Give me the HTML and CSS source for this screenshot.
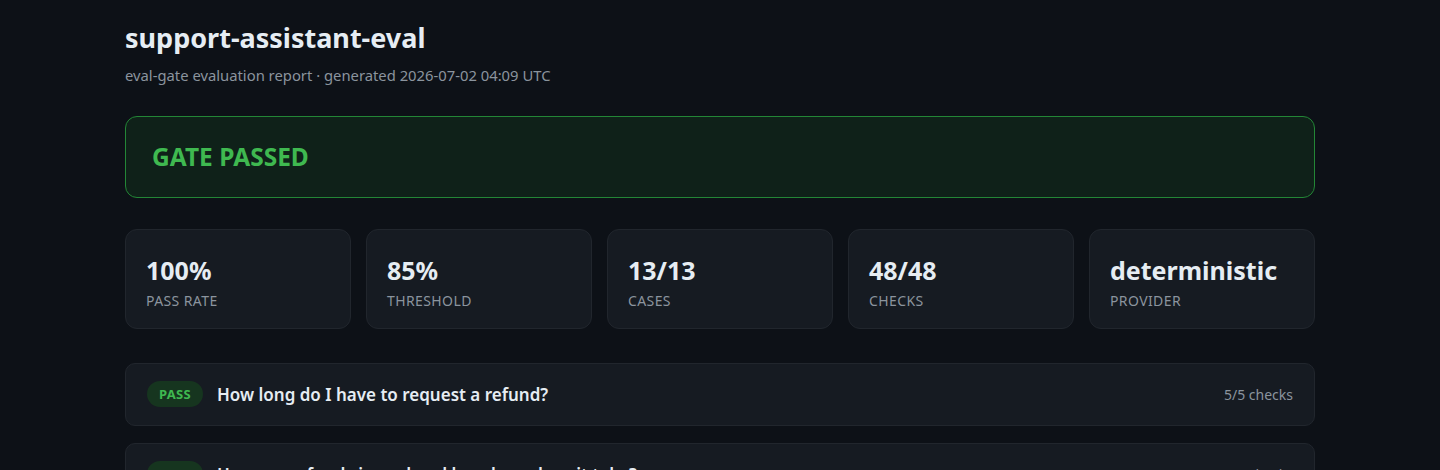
FILE: index.html
```html
<!DOCTYPE html>
<html lang="en">
<head>
    <meta charset="UTF-8">
    <meta name="viewport" content="width=device-width, initial-scale=1.0">
    <title>support-assistant-eval</title>
    <link rel="stylesheet" href="styles.css">
</head>
<body>
    <div class="container">
        <div class="header">
            <h1>support-assistant-eval</h1>
            <p>eval-gate evaluation report · generated 2026-07-02 04:09 UTC</p>
        </div>

        <div class="gate gate-pass">GATE PASSED</div>

        <div class="stats">
            <div class="stat">
                <div class="stat-value">100%</div>
                <div class="stat-label">Pass rate</div>
            </div>
            <div class="stat">
                <div class="stat-value">85%</div>
                <div class="stat-label">Threshold</div>
            </div>
            <div class="stat">
                <div class="stat-value">13/13</div>
                <div class="stat-label">Cases</div>
            </div>
            <div class="stat">
                <div class="stat-value">48/48</div>
                <div class="stat-label">Checks</div>
            </div>
            <div class="stat">
                <div class="stat-value">deterministic</div>
                <div class="stat-label">Provider</div>
            </div>
        </div>

        <div class="cases">
            <div class="case">
                <span class="badge badge-pass">PASS</span>
                <span class="case-title">How long do I have to request a refund?</span>
                <span class="case-meta">5/5 checks</span>
            </div>
            <div class="case">
                <span class="badge badge-pass">PASS</span>
                <span class="case-title">How are refunds issued and how long does it take?</span>
                <span class="case-meta">4/4 checks</span>
            </div>
        </div>
    </div>
</body>
</html>
```

FILE: styles.css
```css
* {
    margin: 0;
    padding: 0;
    box-sizing: border-box;
}

body {
    font-family: 'Segoe UI', 'Noto Sans', sans-serif;
    background: #0d1117;
    color: #e6edf3;
    padding: 20px 0;
}

.container {
    max-width: 1190px;
    margin: 0 auto;
}

.header h1 {
    font-size: 27px;
    font-weight: 700;
    line-height: 36px;
}

.header p {
    color: #8b949e;
    font-size: 14.8px;
    margin-top: 9px;
}

.gate {
    margin-top: 31px;
    padding: 27px 26px;
    border-radius: 12px;
    font-size: 24.5px;
    font-weight: 700;
    line-height: 26px;
}

.gate-pass {
    background: #0f2119;
    border: 1px solid #238636;
    color: #3fb950;
}

.stats {
    display: grid;
    grid-template-columns: repeat(5, 1fr);
    gap: 15px;
    margin-top: 31px;
}

.stat {
    background: #161b22;
    border: 1px solid #21262d;
    border-radius: 12px;
    padding: 24px 20px 18px;
}

.stat-value {
    font-size: 25px;
    font-weight: 700;
    line-height: 32px;
}

.stat-label {
    color: #8b949e;
    font-size: 14px;
    text-transform: uppercase;
    letter-spacing: 0.4px;
    margin-top: 5px;
}

.cases {
    margin-top: 34px;
    display: flex;
    flex-direction: column;
    gap: 17px;
}

.case {
    display: flex;
    align-items: center;
    gap: 14px;
    background: #161b22;
    border: 1px solid #21262d;
    border-radius: 10px;
    padding: 17px 21px 18px;
}

.badge {
    font-size: 13px;
    font-weight: 700;
    padding: 4px 12px;
    border-radius: 999px;
    letter-spacing: 0.3px;
}

.badge-pass {
    background: #16351f;
    color: #3fb950;
}

.case-title {
    font-size: 17px;
    font-weight: 600;
    flex: 1;
}

.case-meta {
    color: #8b949e;
    font-size: 14px;
}
```
